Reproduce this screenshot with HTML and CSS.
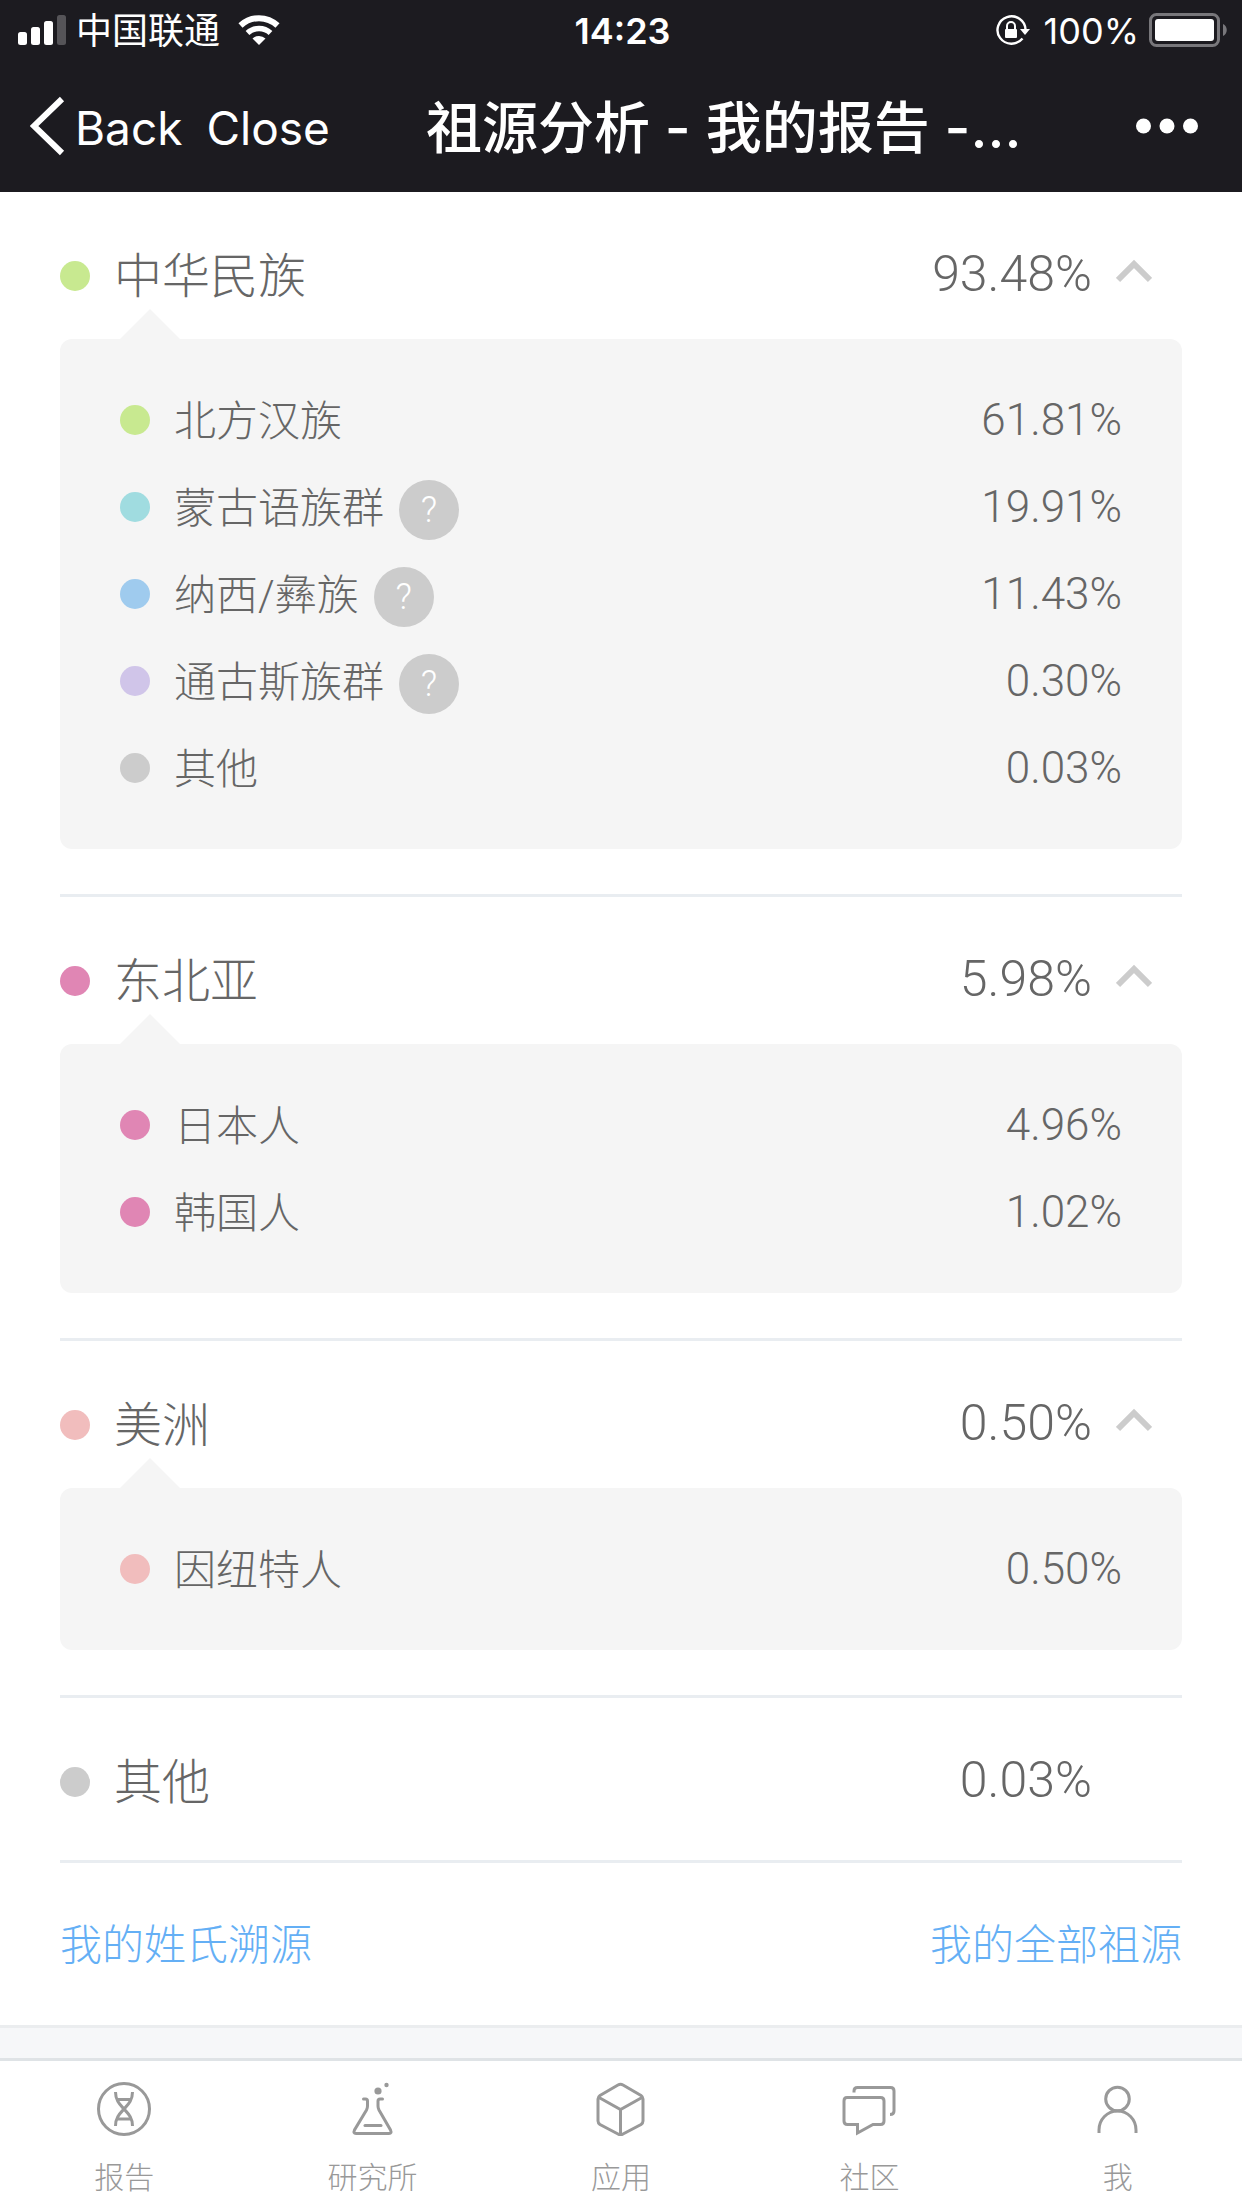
FILE: index.html
```html
<!DOCTYPE html>
<html lang="zh-CN">
<head>
    <meta charset="UTF-8">
    <meta name="viewport" content="width=device-width, initial-scale=1.0">
    <title>祖源分析 - 我的报告</title>
    <link rel="stylesheet" href="styles.css">
</head>
<body>
    <header class="top">
        <div class="status-bar">
            <div class="status-left">
                <svg class="signal" width="48" height="30" viewBox="0 0 48 30" fill="#fff">
                    <rect x="0" y="17" width="9" height="13" rx="2.5"/>
                    <rect x="13" y="12" width="9" height="18" rx="2.5"/>
                    <rect x="26" y="6" width="9" height="24" rx="2.5"/>
                    <rect x="39" y="0" width="9" height="30" rx="2.5" opacity="0.25"/>
                </svg>
                <span>中国联通</span>
                <svg class="wifi" width="42" height="30" viewBox="0 0 42 30">
                    <path d="M2.5 10.5a27 27 0 0 1 37 0" fill="none" stroke="#fff" stroke-width="6"/>
                    <path d="M9.5 18a17 17 0 0 1 23 0" fill="none" stroke="#fff" stroke-width="5.5"/>
                    <path d="M21 30l-6.5-6.5a9.5 9.5 0 0 1 13 0z" fill="#fff"/>
                </svg>
            </div>
            <time class="clock">14:23</time>
            <div class="status-right">
                <svg class="lock" width="34" height="30" viewBox="0 0 34 30">
                    <path d="M26.5 23.5a14 13.7 0 1 1 3-9" fill="none" stroke="#fff" stroke-width="2.4"/>
                    <path d="M24 14h10l-5 6z" fill="#fff"/>
                    <rect x="9" y="14" width="12" height="9" rx="1" fill="#fff"/>
                    <path d="M11 15v-4a4 4 0 0 1 8 0v4" fill="none" stroke="#fff" stroke-width="2"/>
                </svg>
                <span>100%</span>
                <svg width="78" height="34" viewBox="0 0 78 34">
                    <rect x="1.5" y="1.5" width="68" height="31" rx="6" fill="none" stroke="#78777b" stroke-width="3"/>
                    <rect x="6" y="6" width="59" height="22" rx="3" fill="#fff"/>
                    <path d="M74 11c5 2 5 10 0 12z" fill="#78777b"/>
                </svg>
            </div>
        </div>
        <nav class="nav-bar">
            <div class="nav-left">
                <button class="nav-button" type="button">
                    <svg width="36" height="60" viewBox="0 0 36 60">
                        <path d="M32 3L4 30l28 27" fill="none" stroke="#fff" stroke-width="6"/>
                    </svg>
                    <span>Back</span>
                </button>
                <button class="nav-button" type="button"><span>Close</span></button>
            </div>
            <h1>祖源分析 - 我的报告 -...</h1>
            <button class="more" type="button" aria-label="更多">
                <svg width="62" height="16" viewBox="0 0 62 16" fill="#fff">
                    <circle cx="7.5" cy="8" r="7.5"/>
                    <circle cx="31" cy="8" r="7.5"/>
                    <circle cx="54.5" cy="8" r="7.5"/>
                </svg>
            </button>
        </nav>
    </header>

    <main class="report">
        <details class="group" open>
            <summary class="group-head">
                <i class="dot green"></i>
                <span class="name">中华民族</span>
                <span class="percent">93.48%</span>
                <svg class="chevron" width="36" height="24" viewBox="0 0 36 24"><path d="M2 21L18 5l16 16"/></svg>
            </summary>
            <ul class="panel">
                <li><i class="dot green"></i><span class="name">北方汉族</span><span class="percent">61.81%</span></li>
                <li><i class="dot teal"></i><span class="name">蒙古语族群<button class="help" type="button">?</button></span><span class="percent">19.91%</span></li>
                <li><i class="dot blue"></i><span class="name">纳西/彝族<button class="help" type="button">?</button></span><span class="percent">11.43%</span></li>
                <li><i class="dot purple"></i><span class="name">通古斯族群<button class="help" type="button">?</button></span><span class="percent">0.30%</span></li>
                <li><i class="dot gray"></i><span class="name">其他</span><span class="percent">0.03%</span></li>
            </ul>
        </details>

        <details class="group" open>
            <summary class="group-head">
                <i class="dot pink"></i>
                <span class="name">东北亚</span>
                <span class="percent">5.98%</span>
                <svg class="chevron" width="36" height="24" viewBox="0 0 36 24"><path d="M2 21L18 5l16 16"/></svg>
            </summary>
            <ul class="panel">
                <li><i class="dot pink"></i><span class="name">日本人</span><span class="percent">4.96%</span></li>
                <li><i class="dot pink"></i><span class="name">韩国人</span><span class="percent">1.02%</span></li>
            </ul>
        </details>

        <details class="group" open>
            <summary class="group-head">
                <i class="dot salmon"></i>
                <span class="name">美洲</span>
                <span class="percent">0.50%</span>
                <svg class="chevron" width="36" height="24" viewBox="0 0 36 24"><path d="M2 21L18 5l16 16"/></svg>
            </summary>
            <ul class="panel">
                <li><i class="dot salmon"></i><span class="name">因纽特人</span><span class="percent">0.50%</span></li>
            </ul>
        </details>

        <div class="group single">
            <div class="group-head">
                <i class="dot gray"></i>
                <span class="name">其他</span>
                <span class="percent">0.03%</span>
            </div>
        </div>

        <div class="links">
            <a href="#surname">我的姓氏溯源</a>
            <a href="#all">我的全部祖源</a>
        </div>
    </main>

    <nav class="tab-bar">
        <a href="#report">
            <svg class="icon" viewBox="0 0 54 54">
                <circle cx="27" cy="27" r="25.5"/>
                <path d="M18.5 10c0 9 5 13 8.5 17s8.5 8 8.5 17M35.5 10c0 9-5 13-8.5 17s-8.5 8-8.5 17M20 17.5h14M20 37h14"/>
            </svg>
            报告
        </a>
        <a href="#lab">
            <svg class="icon" viewBox="0 0 54 54">
                <path d="M17.5 17h2q2 0 2 2v5q0 2-1 4L8.5 48q-1.5 3.500 1.500 3.500h33q3 0 1.500-3.500L33 28q-1-2-1-4v-5q0-2 2-2h2.500" stroke-linecap="round"/>
                <path d="M19 43.5h16" stroke-linecap="round"/>
                <circle class="solid" cx="32" cy="9" r="3.6"/>
                <circle class="solid" cx="40.5" cy="3" r="2.2"/>
            </svg>
            研究所
        </a>
        <a href="#apps">
            <svg class="icon" viewBox="0 0 54 54">
                <path d="M24 3q2.5-1.5 5 0l18 10.5q2 1.5 2 3.5v22q0 2-2 3.5L29 52q-2.5 1.5-5 0L6 42.5q-2-1.5-2-3.5V17q0-2 2-3.5zM5 15.5L26.5 27.5 48 15.5M26.5 27v25"/>
            </svg>
            应用
        </a>
        <a href="#community">
            <svg class="icon" viewBox="0 0 54 54">
                <path d="M5 15.5h33.5q3.5 0 3.5 3.5v20q0 3.5-3.5 3.5H31L15.5 51v-8.5H5.5Q2 42.5 2 39V19q0-3.5 3-3.5z"/>
                <path d="M12 10.5V9q0-3.5 3.5-3.5h33Q52 5.5 52 9v20q0 3.5-4 3.5"/>
            </svg>
            社区
        </a>
        <a href="#me">
            <svg class="icon" viewBox="0 0 54 54">
                <ellipse cx="26.5" cy="17" rx="11.8" ry="11.8"/>
                <path d="M8 51v-3a18.5 19 0 0 1 37 0v3"/>
            </svg>
            我
        </a>
    </nav>
</body>
</html>
```

FILE: styles.css
```css
* {
    box-sizing: border-box;
}
body {
    margin: 0;
    min-height: 100vh;
    display: flex;
    flex-direction: column;
    background-color: #f6f7f9;
    color: #666;
    font-family: Roboto, "Noto Sans CJK SC", sans-serif;
    font-weight: 300;
}
button {
    margin: 0;
    padding: 0;
    border: none;
    background: none;
    color: inherit;
    font: inherit;
    cursor: pointer;
}
a {
    text-decoration: none;
}
svg {
    display: block;
    flex: none;
}

/* header */
.top {
    background-color: #1c1b20;
    color: #fff;
    font-family: Inter, "Noto Sans CJK SC", sans-serif;
    font-weight: 400;
}
.status-bar {
    display: grid;
    grid-template-columns: 1fr auto 1fr;
    align-items: center;
    height: 60px;
    padding: 0 15px 0 18px;
    font-size: 36px;
    line-height: 48px;
}
.status-bar span, .clock {
    padding-top: 2px;
}
.status-left, .status-right {
    display: flex;
    align-items: center;
    gap: 10px;
}
.wifi {
    margin-left: 8px;
}
.lock {
    margin-right: 4px;
}
.status-right {
    justify-content: flex-end;
}
.clock {
    font-weight: 600;
}
.nav-bar {
    display: flex;
    align-items: center;
    height: 132px;
    padding: 0 44px 0 30px;
}
.nav-left {
    display: flex;
    gap: 24px;
}
.nav-button {
    display: flex;
    align-items: center;
    gap: 9px;
    font-size: 46px;
    line-height: 60px;
}
.nav-button span {
    padding-top: 4px;
}
h1 {
    flex: 1;
    margin: 0 0 0 96px;
    padding-top: 3px;
    font-size: 56px;
    font-weight: 500;
    line-height: 72px;
    white-space: nowrap;
}

/* report */
.report {
    padding: 0 60px;
    background-color: #fff;
    border-bottom: 3px solid #ebedef;
}
.group {
    border-bottom: 3px solid #e9edf1;
    padding-bottom: 45px;
}
.single {
    padding-bottom: 15px;
}
.group-head {
    display: flex;
    align-items: center;
    height: 147px;
    padding: 45px 30px 24px 0;
    font-size: 48px;
    list-style: none;
    cursor: pointer;
}
.single .group-head {
    padding-right: 90px;
    cursor: default;
}
.dot {
    flex: none;
    width: 30px;
    height: 30px;
    margin-right: 24px;
    border-radius: 50%;
}
.green { background-color: #c8e990; }
.teal { background-color: #a0dce0; }
.blue { background-color: #9fcbee; }
.purple { background-color: #d0c5e9; }
.gray { background-color: #ccc; }
.pink { background-color: #e086b4; }
.salmon { background-color: #f1bdbd; }
.name {
    flex: 1;
    display: flex;
    align-items: center;
    padding-bottom: 4px;
}
.group-head .name {
    padding-bottom: 9px;
}
.percent {
    font-size: 44px;
}
.group-head .percent {
    padding-bottom: 4px;
    font-size: 50px;
}
.chevron {
    margin: 0 0 11px 24px;
    fill: none;
    stroke: #ccc;
    stroke-width: 6;
}
.panel {
    position: relative;
    margin: 0;
    padding: 37px 60px 38px;
    border-radius: 12px;
    background-color: #f5f5f5;
    font-size: 42px;
    list-style: none;
}
.panel::before {
    content: "";
    position: absolute;
    top: -30px;
    left: 60px;
    border: 30px solid transparent;
    border-top: none;
    border-bottom-color: #f5f5f5;
}
.panel li {
    display: flex;
    align-items: center;
    height: 87px;
}
.help {
    width: 60px;
    height: 60px;
    margin: 10px 0 0 15px;
    border-radius: 50%;
    background-color: #ccc;
    color: #fff;
    font-size: 36px;
    line-height: 60px;
}
.links {
    display: flex;
    justify-content: space-between;
    padding: 53px 0 49px;
    font-size: 42px;
    line-height: 60px;
}
.links a {
    color: #64aff5;
}

/* tabs */
.tab-bar {
    display: flex;
    margin-top: auto;
    height: 150px;
    border-top: 3px solid #dfe3e6;
    background-color: #fff;
}
.tab-bar a {
    flex: 1;
    display: flex;
    flex-direction: column;
    align-items: center;
    gap: 21px;
    padding-top: 21px;
    color: #999;
    font-size: 30px;
    line-height: 42px;
}
.icon {
    width: 54px;
    height: 54px;
    fill: none;
    stroke: #999;
    stroke-width: 3;
}
.icon .solid {
    fill: #999;
    stroke: none;
}
```
